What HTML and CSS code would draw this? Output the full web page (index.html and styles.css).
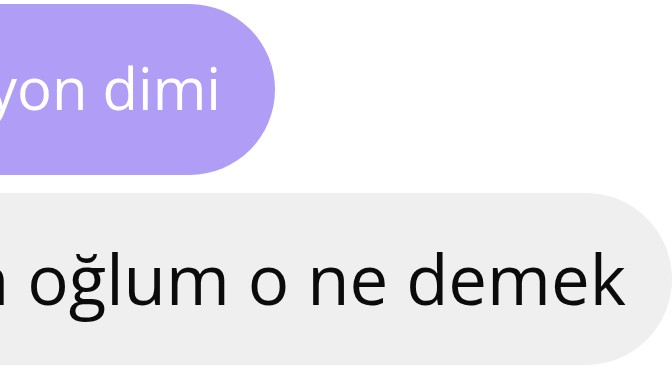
FILE: index.html
```html
<!DOCTYPE html>
<html lang="en">
<head>
    <meta charset="UTF-8">
    <meta name="viewport" content="width=device-width, initial-scale=1.0">
    <title>Chat</title>
    <link rel="stylesheet" href="styles.css">
</head>
<body>
    <div class="chat">
        <div class="bubble bubble-sent">
            <span class="bubble-text">yon dimi</span>
        </div>
        <div class="bubble bubble-received">
            <span class="bubble-text">n oğlum o ne demek</span>
        </div>
    </div>
</body>
</html>
```

FILE: styles.css
```css
html, body {
    margin: 0;
    padding: 0;
    background: #ffffff;
    overflow: hidden;
}
body {
    width: 672px;
    height: 378px;
    font-family: 'Open Sans', 'Noto Sans', sans-serif;
}
.chat {
    display: flex;
    flex-direction: column;
    align-items: flex-start;
    gap: 18px;
    padding-top: 4px;
}
.bubble {
    display: flex;
    align-items: center;
    justify-content: flex-end;
    box-sizing: border-box;
    border-radius: 86px;
    white-space: nowrap;
}
.bubble-sent {
    background-color: #b09df5;
    color: #ffffff;
    width: 420px;
    height: 171px;
    margin-left: -145px;
    padding-right: 54px;
    padding-bottom: 4px;
    font-size: 58px;
}
.bubble-received {
    background-color: #efefef;
    color: #0b0b0b;
    width: 840px;
    height: 172px;
    margin-left: -168px;
    padding-right: 46px;
    padding-bottom: 2px;
    font-size: 69px;
}
.bubble-text {
    display: block;
}
```
